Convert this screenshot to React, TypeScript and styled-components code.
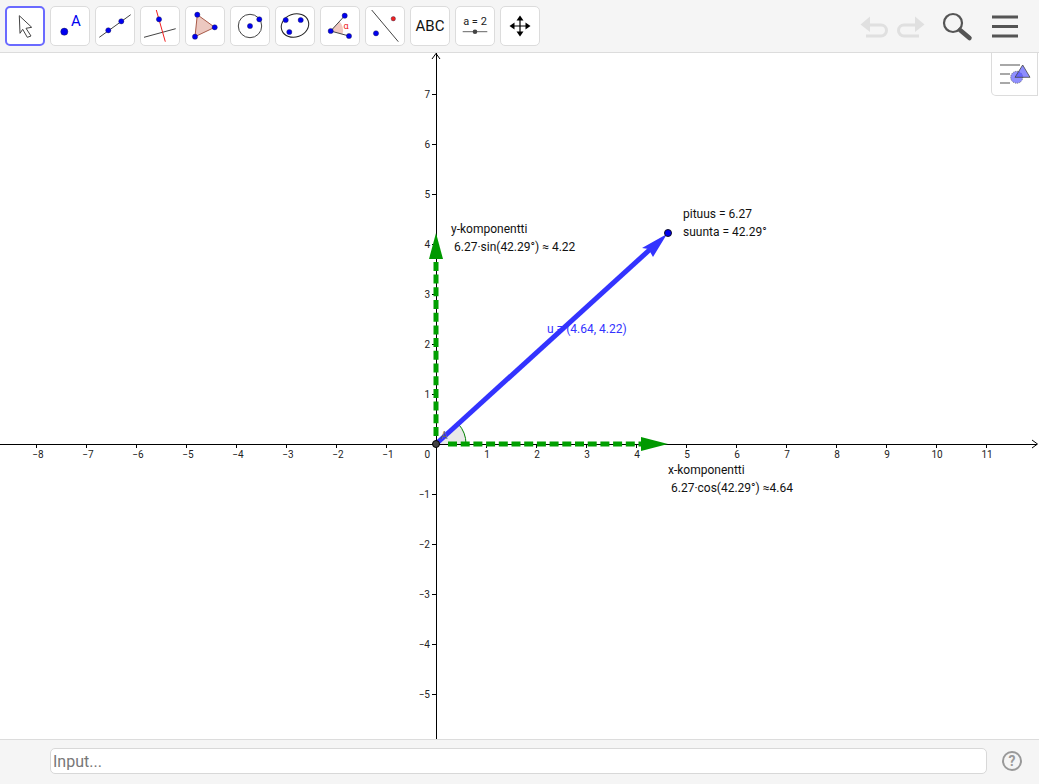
import React from 'react';
import styled, { createGlobalStyle } from 'styled-components';

const GlobalStyle = createGlobalStyle`
  html, body {
    margin: 0;
    padding: 0;
    background: #fff;
    font-family: Roboto, "Liberation Sans", sans-serif;
  }
`;

const Page = styled.div`
  display: flex;
  flex-direction: column;
  height: 784px;
  overflow: hidden;
`;

const Toolbar = styled.header`
  display: flex;
  align-items: flex-start;
  flex: none;
  gap: 5px;
  box-sizing: border-box;
  height: 53px;
  padding: 6px 0 0 5px;
  background: #f5f5f5;
  border-bottom: 1px solid #dcdcdc;
`;

const ToolButton = styled.div<{ $active?: boolean }>`
  display: flex;
  align-items: center;
  justify-content: center;
  flex: none;
  box-sizing: border-box;
  width: 40px;
  height: 40px;
  background: #fff;
  border-radius: 5px;
  border: ${({ $active }) => ($active ? '2px solid #6a6aff' : '1px solid #dcdcdc')};
  color: #111;
  font-size: 15px;

  svg {
    display: block;
    flex: none;
    margin: ${({ $active }) => ($active ? '-2px' : '-1px')};
  }
`;

const ActionGroup = styled.div`
  display: flex;
  align-items: center;
  margin-left: auto;
  padding-right: 21px;
  height: 40px;
`;

const Canvas = styled.main`
  position: relative;
  flex: 1;
  min-height: 0;
  background: #fff;
`;

const Chart = styled.svg`
  display: block;
  width: 1039px;
  height: 686px;
`;

const TickLabel = styled.text`
  font-family: Roboto, "Liberation Sans", sans-serif;
  font-size: 10px;
  fill: #222;
`;

const Note = styled.text<{ $color?: string }>`
  font-family: Roboto, "Liberation Sans", sans-serif;
  font-size: 12px;
  fill: ${({ $color }) => $color ?? '#111'};
`;

const AngleLabel = styled(Note)`
  font-size: 10px;
`;

const StylePanel = styled.div`
  position: absolute;
  top: 0;
  right: 1px;
  box-sizing: border-box;
  width: 47px;
  height: 43px;
  display: flex;
  align-items: flex-start;
  padding: 9px 0 0 8px;
  background: #fff;
  border: 1px solid #dcdcdc;
  border-top: none;
  border-bottom-left-radius: 5px;
`;

const InputBar = styled.footer`
  display: flex;
  align-items: center;
  flex: none;
  box-sizing: border-box;
  height: 45px;
  padding: 0 17px 2px 50px;
  gap: 15px;
  background: #f5f5f5;
  border-top: 1px solid #dcdcdc;
`;

const CommandInput = styled.input`
  flex: 1;
  box-sizing: border-box;
  height: 26px;
  padding: 0 2px;
  border: 1px solid #d8d8d8;
  border-radius: 5px;
  background: #fff;
  font-family: Roboto, "Liberation Sans", sans-serif;
  font-size: 16px;
  outline: none;

  &::placeholder {
    color: #777;
    opacity: 1;
  }
`;

const Dot = ({ x, y, fill = '#0000f0', r = 2.6 }: { x: number; y: number; fill?: string; r?: number }) => (
  <circle cx={x} cy={y} r={r} fill={fill} stroke="#224" strokeWidth={0.4} />
);

const Icon = ({ children }: { children: React.ReactNode }) => (
  <svg width="40" height="40" viewBox="0 0 40 40">{children}</svg>
);

const X_TICKS = [-8, -7, -6, -5, -4, -3, -2, -1, 1, 2, 3, 4, 5, 6, 7, 8, 9, 10, 11];
const Y_TICKS = [7, 6, 5, 4, 3, 2, 1, -1, -2, -3, -4, -5];
const ORIGIN_X = 436;
const ORIGIN_Y = 444;
const UNIT = 50;
const fmt = (n: number) => (n < 0 ? `\u2212${-n}` : `${n}`);

const GeoCanvas = () => (
  <Chart viewBox="0 53 1039 686">
    {/* axes */}
    <g shapeRendering="crispEdges" stroke="#000">
      <line x1={0} y1={ORIGIN_Y} x2={1037} y2={ORIGIN_Y} />
      <line x1={ORIGIN_X} y1={53} x2={ORIGIN_X} y2={739} />
      {X_TICKS.map((t) => {
        const x = ORIGIN_X + t * UNIT;
        return <line key={t} x1={x} y1={444} x2={x} y2={448} />;
      })}
      {Y_TICKS.map((t) => {
        const y = ORIGIN_Y - t * UNIT;
        return <line key={t} x1={432} y1={y} x2={436} y2={y} />;
      })}
    </g>
    <path d="M1032 440 L1037.5 444 L1032 448" fill="none" stroke="#000" />
    <path d="M432 59 L436 53.5 L440 59" fill="none" stroke="#000" />
    {X_TICKS.map((t) => (
      <TickLabel key={t} x={ORIGIN_X + t * UNIT + (t < 0 ? 2 : 1)} y={458} textAnchor="middle">{fmt(t)}</TickLabel>
    ))}
    {Y_TICKS.map((t) => (
      <TickLabel key={t} x={430} y={ORIGIN_Y - t * UNIT + 4} textAnchor="end">{fmt(t)}</TickLabel>
    ))}
    <TickLabel x={430} y={458} textAnchor="end">0</TickLabel>

    {/* angle */}
    <path d="M436 444 L466 444 A30 30 0 0 0 458.2 423.8 Z" fill="#e8e8e8" />
    <path d="M466 444 A30 30 0 0 0 458.2 423.8" fill="none" stroke="#008000" strokeWidth={1} />

    {/* components */}
    <line x1={448} y1={444} x2={644} y2={444} stroke="#00a000" strokeWidth={5} strokeDasharray="9 3.7" />
    <polygon points="641,437 668,444 641,451" fill="#009900" />
    <line x1={436} y1={436} x2={436} y2={258} stroke="#00a000" strokeWidth={5} strokeDasharray="9 3.7" />
    <polygon points="429,259 436,233 443,259" fill="#009900" />

    {/* vector */}
    <line x1={436} y1={444} x2={651} y2={248.5} stroke="#3333ff" strokeWidth={5} />
    <polygon points="667,234 653,257 648.5,249 642,248" fill="#3333ff" />
    <AngleLabel x={441} y={439} $color="#666">A</AngleLabel>
    <circle cx={436} cy={444} r={3.5} fill="#444" stroke="#000" />
    <circle cx={668} cy={233} r={3.5} fill="#0000ee" stroke="#112" />

    {/* labels */}
    <Note x={683} y={218}>pituus = 6.27</Note>
    <Note x={683} y={236}>suunta = 42.29°</Note>
    <Note x={451} y={233}>y-komponentti</Note>
    <Note x={454} y={251}>6.27·sin(42.29°) ≈ 4.22</Note>
    <Note x={547} y={333} $color="#3333ff">u = (4.64, 4.22)</Note>
    <Note x={668} y={474}>x-komponentti</Note>
    <Note x={671} y={492}>6.27·cos(42.29°) ≈4.64</Note>
  </Chart>
);

const App: React.FC = () => (
  <Page>
    <GlobalStyle />
    <Toolbar>
      <ToolButton $active>
        <Icon>
          <polygon points="14.3,9.7 26.7,21.3 21,22.3 26,30 22.3,31.3 17.7,23.3 15,27.3" fill="#fff" stroke="#444" strokeWidth={1} />
        </Icon>
      </ToolButton>
      <ToolButton>
        <Icon>
          <circle cx={14.3} cy={25.7} r={3.6} fill="#0000f0" stroke="#223" strokeWidth={0.4} />
          <text x={26} y={19.5} textAnchor="middle" fontSize={15} fontFamily="Roboto, sans-serif" fill="#0000f0">A</text>
        </Icon>
      </ToolButton>
      <ToolButton>
        <Icon>
          <line x1={4.3} y1={31.3} x2={35.7} y2={8.7} stroke="#444" />
          <Dot x={13.3} y={24.3} />
          <Dot x={26.3} y={15.3} />
        </Icon>
      </ToolButton>
      <ToolButton>
        <Icon>
          <line x1={4} y1={31.3} x2={35.7} y2={22.7} stroke="#444" />
          <line x1={16.3} y1={4} x2={25.3} y2={35.7} stroke="#f02020" />
          <Dot x={19} y={13.3} />
        </Icon>
      </ToolButton>
      <ToolButton>
        <Icon>
          <polygon points="12.3,8.7 29.7,21.3 10,30.7" fill="#ecc8c0" stroke="#a85a48" />
          <Dot x={12.3} y={8.7} />
          <Dot x={29.7} y={21.3} />
          <Dot x={10} y={30.7} />
        </Icon>
      </ToolButton>
      <ToolButton>
        <Icon>
          <circle cx={20} cy={20} r={11.7} fill="none" stroke="#444" />
          <Dot x={20} y={20} />
          <Dot x={29.3} y={13.3} />
        </Icon>
      </ToolButton>
      <ToolButton>
        <Icon>
          <ellipse cx={20} cy={19.5} rx={14} ry={11.5} fill="none" stroke="#222" transform="rotate(-20 20 19.5)" />
          <Dot x={10.7} y={14} />
          <Dot x={25.7} y={14} />
          <Dot x={14.3} y={26} />
        </Icon>
      </ToolButton>
      <ToolButton>
        <Icon>
          <path d="M10.7 25 L19.5 15.5 A13 13 0 0 1 22.5 28 Z" fill="#f0c8c0" />
          <line x1={10.7} y1={25} x2={24.7} y2={9.7} stroke="#444" />
          <line x1={10.7} y1={25} x2={29} y2={30} stroke="#444" />
          <Dot x={10.7} y={25} />
          <Dot x={24.7} y={9.7} />
          <Dot x={29} y={30} />
          <text x={26} y={23} textAnchor="middle" fontSize={9} fontFamily="Roboto, sans-serif" fill="#f02020">α</text>
        </Icon>
      </ToolButton>
      <ToolButton>
        <Icon>
          <line x1={6.7} y1={4} x2={33.3} y2={35.7} stroke="#444" />
          <Dot x={28.3} y={12.7} fill="#f02020" r={2.2} />
          <Dot x={11} y={27.3} />
        </Icon>
      </ToolButton>
      <ToolButton>ABC</ToolButton>
      <ToolButton>
        <Icon>
          <text x={20} y={19} textAnchor="middle" fontSize={11} fontFamily="Roboto, sans-serif" fill="#222">a = 2</text>
          <line x1={7.7} y1={25.7} x2={32.3} y2={25.7} stroke="#666" />
          <circle cx={20} cy={25.7} r={2.3} fill="#444" />
        </Icon>
      </ToolButton>
      <ToolButton>
        <Icon>
          <path d="M20 13 V27 M13 20 H27" stroke="#000" strokeWidth={1.2} />
          <polygon points="20,9.5 16.5,14.5 23.5,14.5" fill="#000" />
          <polygon points="20,30.5 16.5,25.5 23.5,25.5" fill="#000" />
          <polygon points="9.5,20 14.5,16.5 14.5,23.5" fill="#000" />
          <polygon points="30.5,20 25.5,16.5 25.5,23.5" fill="#000" />
        </Icon>
      </ToolButton>
      <ActionGroup>
        <svg width="132" height="40" viewBox="860 6 132 40">
          <g fill="none" stroke="#e0e0e0" strokeWidth={3}>
            <path d="M866 25 H881 A5.5 5.5 0 0 1 881 36 H866" />
            <path d="M919 25 H904 A5.5 5.5 0 0 0 904 36 H919" />
          </g>
          <polygon points="860.5,24.5 870,16.5 870,32" fill="#e0e0e0" />
          <polygon points="924.5,24.5 915,16.5 915,32" fill="#e0e0e0" />
          <circle cx={953} cy={23} r={9} fill="none" stroke="#555" strokeWidth={2.2} />
          <line x1={960} y1={30} x2={969.5} y2={38} stroke="#555" strokeWidth={4.5} strokeLinecap="round" />
        </svg>
        <svg width="26" height="40" viewBox="992 6 26 40">
          <path d="M992 17 H1018 M992 26.5 H1018 M992 36 H1018" stroke="#555" strokeWidth={3} />
        </svg>
      </ActionGroup>
    </Toolbar>
    <Canvas>
      <GeoCanvas />
      <StylePanel>
        <svg width="32" height="26" viewBox="0 0 32 26">
          <path d="M0 3 H20 M0 12 H10 M0 21 H10" stroke="#a8a8a8" strokeWidth={2} />
          <circle cx={16.7} cy={15.3} r={6} fill="#6060ff" fillOpacity={0.7} stroke="#555" strokeWidth={0.8} strokeDasharray="1 1" />
          <polygon points="22.7,3 30,15.3 15,15.3" fill="#5050ff" fillOpacity={0.65} stroke="#444" strokeWidth={0.8} />
        </svg>
      </StylePanel>
    </Canvas>
    <InputBar>
      <CommandInput placeholder="Input..." />
      <svg width="20" height="20" viewBox="0 0 20 20">
        <circle cx={10} cy={10} r={9} fill="none" stroke="#999" strokeWidth={2} />
        <text x={10} y={15} textAnchor="middle" fontSize={14} fontWeight={700} fontFamily="Roboto, sans-serif" fill="#999">?</text>
      </svg>
    </InputBar>
  </Page>
);

export default App;
